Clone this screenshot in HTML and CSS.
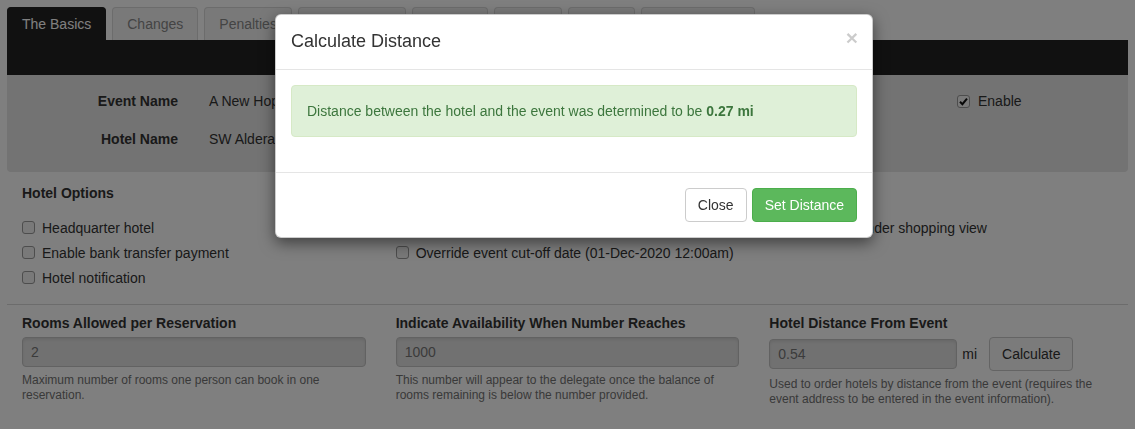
FILE: index.html
```html
<!DOCTYPE html>
<html lang="en">
<head>
    <meta charset="UTF-8">
    <meta name="viewport" content="width=device-width, initial-scale=1.0">
    <title>Hotel Setup</title>
    <link rel="stylesheet" href="styles.css">
</head>
<body>
    <div class="page">
        <ul class="tabs">
            <li class="tab active">The Basics</li>
            <li class="tab">Changes</li>
            <li class="tab">Penalties</li>
            <li class="tab">Room Types</li>
            <li class="tab">Images</li>
            <li class="tab">Terms</li>
            <li class="tab">Notes</li>
            <li class="tab">Cancellations</li>
        </ul>
        <div class="tab-bar"></div>

        <div class="well">
            <div class="info-row">
                <span class="info-label">Event Name</span>
                <span>A New Hope</span>
                <label class="check"><span class="box checked"><svg viewBox="0 0 13 13" width="13" height="13"><path d="M3 6.8 L5.4 9.2 L10 3.6" fill="none" stroke="#111" stroke-width="2"/></svg></span>Enable</label>
            </div>
            <div class="info-row">
                <span class="info-label">Hotel Name</span>
                <span>SW Alderaan</span>
                <span></span>
            </div>
        </div>

        <div class="options">
            <h4 class="section-title">Hotel Options</h4>
            <div class="col">
                <label class="check"><span class="box"></span>Headquarter hotel</label>
                <label class="check"><span class="box"></span>Enable bank transfer payment</label>
                <label class="check"><span class="box"></span>Hotel notification</label>
            </div>
            <div class="col">
                <label class="check"><span class="box"></span>Featured hotel</label>
                <label class="check"><span class="box"></span>Override event cut-off date (01-Dec-2020 12:00am)</label>
            </div>
            <div class="col">
                <label class="check"><span class="box"></span>Hide from render shopping view</label>
            </div>
        </div>

        <div class="fields">
            <div class="col">
                <div class="field-label">Rooms Allowed per Reservation</div>
                <div class="control-row">
                    <div class="input">2</div>
                </div>
                <p class="help">Maximum number of rooms one person can book in one reservation.</p>
            </div>
            <div class="col">
                <div class="field-label">Indicate Availability When Number Reaches</div>
                <div class="control-row">
                    <div class="input">1000</div>
                </div>
                <p class="help">This number will appear to the delegate once the balance of rooms remaining is below the number provided.</p>
            </div>
            <div class="col">
                <div class="field-label">Hotel Distance From Event</div>
                <div class="control-row">
                    <div class="input short">0.54</div>
                    <span class="unit">mi</span>
                    <button class="btn btn-default">Calculate</button>
                </div>
                <p class="help">Used to order hotels by distance from the event (requires the event address to be entered in the event information).</p>
            </div>
        </div>
    </div>

    <div class="backdrop"></div>

    <div class="modal">
        <div class="modal-header">
            <h4 class="modal-title">Calculate Distance</h4>
            <span class="modal-close">&times;</span>
        </div>
        <div class="modal-body">
            <div class="alert">Distance between the hotel and the event was determined to be <b>0.27 mi</b></div>
        </div>
        <div class="modal-footer">
            <button class="btn btn-default">Close</button>
            <button class="btn btn-success">Set Distance</button>
        </div>
    </div>
</body>
</html>
```

FILE: styles.css
```css
body {
    margin: 0;
    font-family: "Liberation Sans", Arial, sans-serif;
    font-size: 14px;
    line-height: 20px;
    color: #333;
    background-color: #fff;
}
.page {
    padding: 7px 7px 0;
}
.tabs {
    display: flex;
    gap: 6px;
    margin: 0;
    padding: 0;
    list-style: none;
    height: 33px;
}
.tab {
    padding: 0 14px;
    line-height: 32px;
    border: 1px solid #d8d8d8;
    border-bottom: none;
    border-radius: 4px 4px 0 0;
    background-color: #f3f3f3;
    color: #888;
    white-space: nowrap;
}
.tab.active {
    background-color: #222;
    border-color: #222;
    color: #fff;
}
.tab-bar {
    height: 35px;
    background-color: #222;
}
.well {
    background-color: #e6e6e6;
    padding: 7px 0 14px;
    border-radius: 0 0 4px 4px;
}
.info-row {
    display: grid;
    grid-template-columns: 171px 1fr 171px;
    column-gap: 31px;
    height: 38px;
    align-items: center;
}
.info-label {
    text-align: right;
    font-weight: bold;
}
.check {
    display: flex;
    align-items: center;
    height: 25px;
    white-space: nowrap;
}
.box {
    display: inline-block;
    box-sizing: border-box;
    width: 13px;
    height: 13px;
    margin-right: 7px;
    border: 1px solid #9a9a9a;
    border-radius: 3px;
    background-color: #f2f2f2;
    flex-shrink: 0;
}
.box.checked {
    position: relative;
    margin-right: 8px;
}
.box.checked svg {
    position: absolute;
    left: -1px;
    top: -1px;
}
.options, .fields {
    display: grid;
    grid-template-columns: repeat(3, 1fr);
}
.options {
    padding: 11px 0 14px;
    border-bottom: 1px solid #d9d9d9;
}
.col {
    padding: 0 15px;
    min-width: 0;
}
.section-title {
    grid-column: 1 / -1;
    margin: 0 15px 11px;
    font-size: 14px;
    line-height: 20px;
}
.options .col {
    padding-top: 1px;
}
.fields {
    padding: 8px 0 22px;
    border-bottom: 1px solid #d9d9d9;
}
.field-label {
    font-weight: bold;
    margin-bottom: 4px;
}
.control-row {
    display: flex;
    align-items: center;
}
.input {
    box-sizing: border-box;
    flex: 1;
    height: 30px;
    padding: 0 8px;
    line-height: 28px;
    border: 1px solid #c4c4c4;
    border-radius: 4px;
    background-color: #e3e3e3;
    box-shadow: inset 0 2px 3px rgba(0, 0, 0, 0.08);
    color: #777;
}
.input.short {
    flex: 0 0 188px;
}
.unit {
    margin: 0 12px 0 5px;
}
.help {
    margin: 6px 0 0;
    font-size: 12px;
    line-height: 15px;
    color: #737373;
}
.btn {
    height: 34px;
    padding: 0 12px;
    font-family: inherit;
    font-size: 14px;
    border-radius: 4px;
    border: 1px solid #ccc;
    cursor: pointer;
}
.btn-default {
    background-color: #fff;
    color: #333;
}
.fields .btn-default {
    background-color: #f6f6f6;
    border-color: #c8c8c8;
}
.btn-success {
    background-color: #5cb85c;
    border-color: #4cae4c;
    color: #fff;
}
.backdrop {
    position: fixed;
    top: 0;
    left: 0;
    right: 0;
    bottom: 0;
    background-color: rgba(0, 0, 0, 0.5);
}
.modal {
    position: absolute;
    top: 14px;
    left: 275px;
    width: 598px;
    box-sizing: border-box;
    background-color: #fff;
    border: 1px solid rgba(0, 0, 0, 0.2);
    border-radius: 6px;
    box-shadow: 0 5px 15px rgba(0, 0, 0, 0.5);
}
.modal-header {
    position: relative;
    padding: 13px 15px 15px;
    border-bottom: 1px solid #e5e5e5;
}
.modal-title {
    margin: 0;
    font-size: 18px;
    font-weight: normal;
    line-height: 26px;
}
.modal-close {
    position: absolute;
    top: 12px;
    right: 14px;
    font-size: 21px;
    font-weight: bold;
    line-height: 21px;
    color: #000;
    opacity: 0.2;
}
.modal-body {
    padding: 15px;
}
.alert {
    padding: 15px;
    margin-bottom: 20px;
    border: 1px solid #d6e9c6;
    border-radius: 4px;
    background-color: #dff0d8;
    color: #3c763d;
}
.modal-footer {
    display: flex;
    justify-content: flex-end;
    gap: 5px;
    padding: 15px;
    border-top: 1px solid #e5e5e5;
}
```
